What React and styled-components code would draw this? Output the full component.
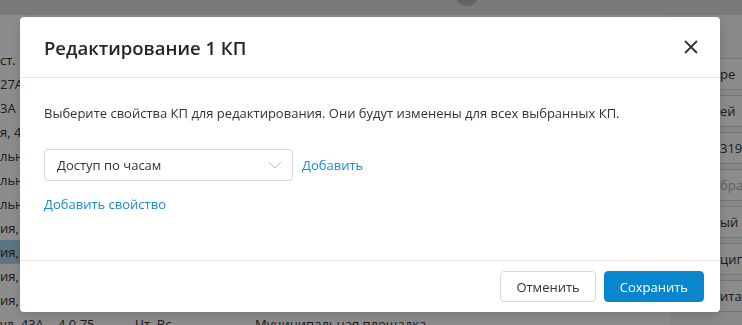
import React from 'react'
import styled, { createGlobalStyle } from 'styled-components'

const GlobalStyle = createGlobalStyle`
  html, body {
    margin: 0;
    padding: 0;
    width: 742px;
    height: 325px;
    overflow: hidden;
    font-family: "Segoe UI", "Open Sans", "Noto Sans", sans-serif;
    color: #333;
  }
`

const Page = styled.div`
  width: 742px;
  height: 325px;
  background: #fff;
  display: flex;
  flex-direction: column;
  overflow: hidden;
`

const TopBar = styled.div`
  height: 15px;
  flex: none;
  background: #dedfdf;
  display: flex;
  align-items: flex-end;
  padding-left: 455px;
  gap: 28px;
  overflow: hidden;
`

const Avatar = styled.div`
  width: 24px;
  height: 24px;
  border-radius: 50%;
  background: #b5b6b6;
  margin-bottom: 9px;
`

const UserName = styled.div`
  font-size: 13px;
  line-height: 18px;
  color: #222;
  margin-bottom: 12px;
`

const Workspace = styled.div`
  flex: 1;
  display: flex;
  background: #f4f4f4;
`

const Table = styled.div`
  flex: 1;
  padding-top: 33px;
  background: #fff;
  font-size: 13px;
`

const Row = styled.div`
  height: 24px;
  line-height: 24px;
  white-space: nowrap;
  display: flex;
  background: ${p => (p.$selected ? '#a8d4f0' : 'transparent')};
`

const Cell = styled.span`
  width: ${p => p.$width}px;
  flex: none;
`

const SidePanel = styled.div`
  width: 72px;
  padding-top: 43px;
  display: flex;
  flex-direction: column;
  gap: 5px;
  background: #f7f7f7;
`

const Field = styled.div`
  height: 32px;
  box-sizing: border-box;
  line-height: 30px;
  border: 1px solid #d4d4d4;
  border-right: none;
  border-radius: 4px 0 0 4px;
  background: #fff;
  font-size: 13px;
  white-space: nowrap;
  overflow: hidden;
  padding-left: 49px;
  color: ${p => (p.$placeholder ? '#b0b0b0' : '#333')};
`

const Overlay = styled.div`
  position: fixed;
  inset: 0;
  background: rgba(0, 0, 0, 0.45);
`

const Modal = styled.div`
  position: fixed;
  left: 20px;
  top: 17px;
  width: 700px;
  height: 295px;
  background: #fff;
  border-radius: 4px;
  display: flex;
  flex-direction: column;
  box-shadow: 0 4px 12px rgba(0, 0, 0, 0.15);
`

const Header = styled.div`
  height: 61px;
  flex: none;
  box-sizing: border-box;
  display: flex;
  align-items: center;
  justify-content: space-between;
  padding: 0 18px 0 24px;
  border-bottom: 1px solid #e8e8e8;
`

const Title = styled.h2`
  margin: 0;
  font-size: 18.5px;
  font-weight: 600;
  color: #262626;
`

const CloseButton = styled.button`
  border: none;
  background: none;
  padding: 4px;
  display: flex;
  cursor: pointer;
`

const Body = styled.div`
  flex: 1;
  padding: 24px 24px 0;
`

const Hint = styled.p`
  margin: 0 0 25px;
  font-size: 13px;
  line-height: 22px;
  color: #333;
`

const PropertyRow = styled.div`
  display: flex;
  align-items: center;
  gap: 9px;
`

const Select = styled.div`
  width: 249px;
  height: 32px;
  box-sizing: border-box;
  border: 1px solid #d9d9d9;
  border-radius: 4px;
  display: flex;
  align-items: center;
  justify-content: space-between;
  padding: 0 10px 0 12px;
  font-size: 13px;
  color: #333;
`

const Link = styled.a`
  font-size: 13px;
  color: #1a8ad4;
  text-decoration: none;
  cursor: pointer;
  line-height: 22px;
`

const AddProperty = styled(Link)`
  display: block;
  margin-top: 12px;
`

const Footer = styled.div`
  height: 52px;
  flex: none;
  box-sizing: border-box;
  border-top: 1px solid #e8e8e8;
  display: flex;
  align-items: center;
  justify-content: flex-end;
  gap: 8px;
  padding: 0 16px;
`

const Button = styled.button`
  height: 31px;
  min-width: ${p => (p.$primary ? 100 : 95)}px;
  padding: 0 15px;
  border-radius: 4px;
  font-family: inherit;
  font-size: 13px;
  cursor: pointer;
  border: 1px solid ${p => (p.$primary ? '#0a86ce' : '#d9d9d9')};
  background: ${p => (p.$primary ? '#0a86ce' : '#fff')};
  color: ${p => (p.$primary ? '#fff' : '#333')};
`

const tableRows = [
  ['ст. 12'],
  ['27А'],
  ['3А'],
  ['я, 4'],
  ['льная'],
  ['льная'],
  ['льная'],
  ['ия, 1'],
  ['ия, 1', true],
  ['ия, 2'],
  ['ия, 4'],
]

const sideFields = [
  ['ре'],
  ['ей'],
  ['3198'],
  ['бра', true],
  ['ый с'],
  ['ципа'],
  ['итая'],
]

export default function App() {
  return (
    <>
      <GlobalStyle />
      <Page>
        <TopBar>
          <Avatar />
          <UserName>от Авол</UserName>
        </TopBar>
        <Workspace>
          <Table>
            {tableRows.map(([text, selected], i) => (
              <Row key={i} $selected={selected}>
                <span>{text}</span>
              </Row>
            ))}
            <Row>
              <Cell $width={58}>ул. 43А</Cell>
              <Cell $width={77}>4 0.75</Cell>
              <Cell $width={120}>Чт, Вс</Cell>
              <Cell $width={200}>Муниципальная площадка</Cell>
            </Row>
          </Table>
          <SidePanel>
            {sideFields.map(([text, placeholder], i) => (
              <Field key={i} $placeholder={placeholder}>
                {text}
              </Field>
            ))}
          </SidePanel>
        </Workspace>
      </Page>
      <Overlay />
      <Modal>
        <Header>
          <Title>Редактирование 1 КП</Title>
          <CloseButton aria-label="Закрыть">
            <svg width="14" height="14" viewBox="0 0 14 14">
              <path d="M1 1 L13 13 M13 1 L1 13" stroke="#333" strokeWidth="1.8" />
            </svg>
          </CloseButton>
        </Header>
        <Body>
          <Hint>
            Выберите свойства КП для редактирования. Они будут изменены для всех выбранных КП.
          </Hint>
          <PropertyRow>
            <Select>
              <span>Доступ по часам</span>
              <svg width="14" height="8" viewBox="0 0 14 8">
                <path d="M1 1 L7 7 L13 1" fill="none" stroke="#bfbfbf" strokeWidth="1" />
              </svg>
            </Select>
            <Link>Добавить</Link>
          </PropertyRow>
          <AddProperty>Добавить свойство</AddProperty>
        </Body>
        <Footer>
          <Button>Отменить</Button>
          <Button $primary>Сохранить</Button>
        </Footer>
      </Modal>
    </>
  )
}
